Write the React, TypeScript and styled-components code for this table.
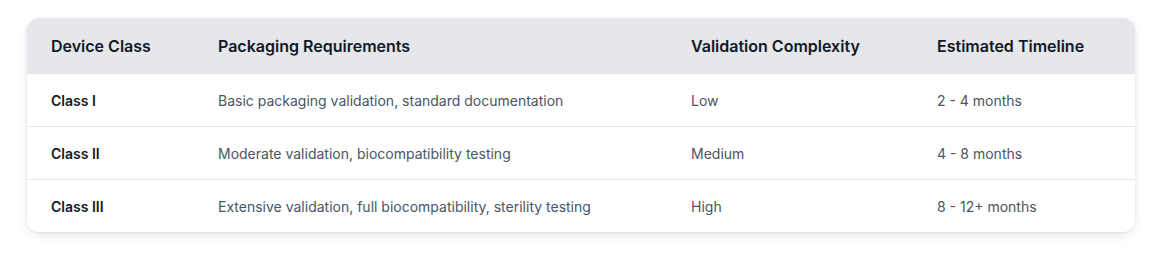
import React from "react";
import styled, { createGlobalStyle } from "styled-components";

const Global = createGlobalStyle`
  html, body { margin: 0; padding: 0; background: #ffffff; }
  body { font-family: Inter, "Noto Sans", sans-serif; -webkit-font-smoothing: antialiased; }
`;

const Page = styled.div`
  padding: 18px 30px 40px 27px;
`;

const Card = styled.div`
  width: 1108px;
  border-radius: 12px;
  overflow: hidden;
  background: #ffffff;
  box-shadow: 0 4px 10px rgba(0, 0, 0, 0.08), 0 1px 3px rgba(0, 0, 0, 0.06);
`;

const Table = styled.table`
  width: 100%;
  border-collapse: collapse;
  table-layout: fixed;
`;

const HeadCell = styled.th`
  height: 56px;
  padding: 0 24px;
  background: #e5e7eb;
  color: #111827;
  font-size: 16px;
  font-weight: 600;
  text-align: left;
  vertical-align: middle;
`;

const Row = styled.tr<{ $last?: boolean }>`
  border-bottom: ${(p) => (p.$last ? "none" : "1px solid #e5e7eb")};
`;

const Cell = styled.td<{ $strong?: boolean }>`
  height: 52px;
  padding: 0 24px;
  font-size: 14px;
  font-weight: ${(p) => (p.$strong ? 600 : 400)};
  color: ${(p) => (p.$strong ? "#111827" : "#4b5563")};
  vertical-align: middle;
`;

const rows = [
  ["Class I", "Basic packaging validation, standard documentation", "Low", "2 - 4 months"],
  ["Class II", "Moderate validation, biocompatibility testing", "Medium", "4 - 8 months"],
  ["Class III", "Extensive validation, full biocompatibility, sterility testing", "High", "8 - 12+ months"],
];

export default function App() {
  return (
    <>
      <Global />
      <Page>
        <Card>
          <Table>
            <colgroup>
              <col style={{ width: 167 }} />
              <col style={{ width: 473 }} />
              <col style={{ width: 246 }} />
              <col style={{ width: 222 }} />
            </colgroup>
            <thead>
              <tr>
                <HeadCell>Device Class</HeadCell>
                <HeadCell>Packaging Requirements</HeadCell>
                <HeadCell>Validation Complexity</HeadCell>
                <HeadCell>Estimated Timeline</HeadCell>
              </tr>
            </thead>
            <tbody>
              {rows.map((r, i) => (
                <Row key={r[0]} $last={i === rows.length - 1}>
                  <Cell $strong>{r[0]}</Cell>
                  <Cell>{r[1]}</Cell>
                  <Cell>{r[2]}</Cell>
                  <Cell>{r[3]}</Cell>
                </Row>
              ))}
            </tbody>
          </Table>
        </Card>
      </Page>
    </>
  );
}
